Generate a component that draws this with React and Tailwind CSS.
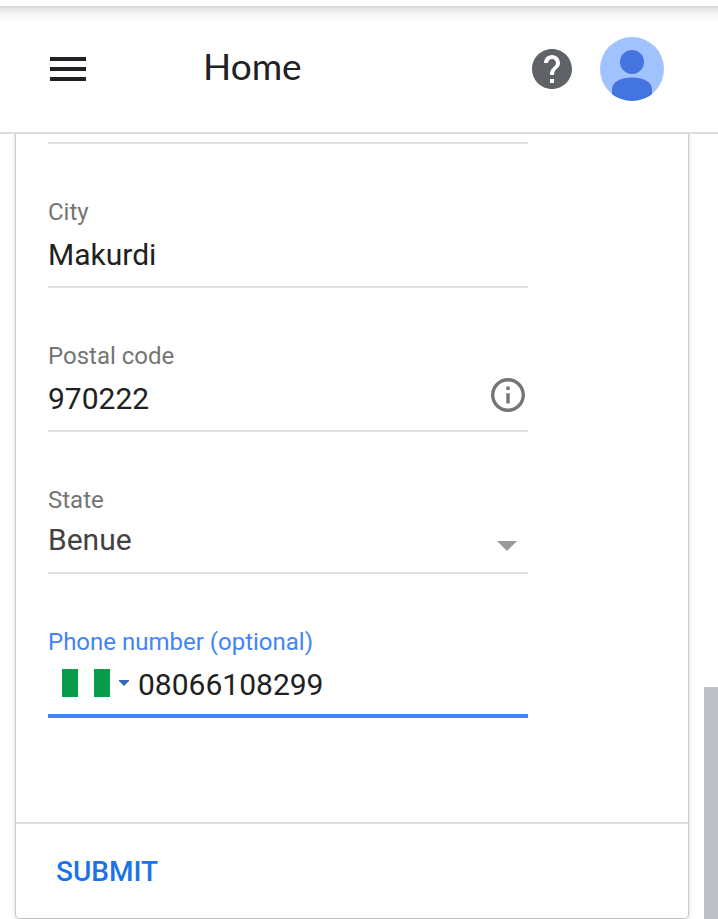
import { useState } from 'react'

const STATES = ['Abia', 'Benue', 'Kano', 'Lagos', 'Rivers']

function Header() {
  return (
    <header className="relative z-10 border-b-2 border-[#dadce0] bg-white pt-[6px]">
      <div className="flex h-[126px] items-center bg-[linear-gradient(to_bottom,#d6d6d6_0px,#e6e6e6_3px,#f4f4f4_8px,#ffffff_16px)] pr-[54px] pl-[50px]">
        <button type="button" aria-label="Main menu" className="flex w-9 flex-col gap-[6px]">
          <span className="h-1 w-full bg-[#202124]" />
          <span className="h-1 w-full bg-[#202124]" />
          <span className="h-1 w-full bg-[#202124]" />
        </button>
        <h1 className="ml-[117px] flex-1 pb-[6px] font-[Lato,sans-serif] text-[37px] leading-[44px] text-[#202124]">
          Home
        </h1>
        <button type="button" aria-label="Help">
          <svg viewBox="2 2 20 20" className="size-10" fill="#5f6368">
            <path d="M12 2C6.48 2 2 6.48 2 12s4.48 10 10 10 10-4.48 10-10S17.52 2 12 2zm1 17h-2v-2h2v2zm2.07-7.75l-.9.92C13.45 12.9 13 13.5 13 15h-2v-.5c0-1.1.45-2.1 1.17-2.83l1.24-1.26c.37-.36.59-.86.59-1.41 0-1.1-.9-2-2-2s-2 .9-2 2H8c0-2.21 1.79-4 4-4s4 1.79 4 4c0 .88-.36 1.68-.93 2.25z" />
          </svg>
        </button>
        <button type="button" aria-label="Account" className="ml-7 overflow-hidden rounded-full">
          <svg viewBox="0 0 64 64" className="size-16">
            <rect width="64" height="64" fill="#a0c3ff" />
            <circle cx="32" cy="25" r="12" fill="#4374e0" />
            <path d="M12 64V52C12 45 21 40.500 32 40.500S52 45 52 52v12z" fill="#4374e0" />
          </svg>
        </button>
      </div>
    </header>
  )
}

export default function App() {
  const [city, setCity] = useState('Makurdi')
  const [postalCode, setPostalCode] = useState('970222')
  const [region, setRegion] = useState('Benue')
  const [phone, setPhone] = useState('08066108299')

  return (
    <div className="flex min-h-screen flex-col bg-white font-[Roboto,sans-serif]">
      <Header />

      <main className="flex flex-1 overflow-hidden">
        <form
          onSubmit={(e) => e.preventDefault()}
          className="-mt-2 mb-px ml-4 flex flex-1 flex-col rounded-b-[4px] bg-white shadow-[0_0_0_1px_rgba(0,0,0,0.12),0_1px_5px_rgba(0,0,0,0.24)]"
        >
          <div className="w-full max-w-[544px] flex-1 px-8 pt-4 pb-[104px]">
            {/* Bottom edge of the address line above */}
            <div className="h-[2px] bg-[#e0e0e0]" />

            {/* City */}
            <div className="border-b-2 border-[#e0e0e0] pt-[54px] pb-3">
              <label htmlFor="city" className="block text-2xl leading-[28px] text-[#757575]">City</label>
              <input
                id="city"
                value={city}
                onChange={(e) => setCity(e.target.value)}
                className="mt-2 block h-10 w-full text-[30px] text-[#212121] outline-none"
              />
            </div>

            {/* Postal code */}
            <div className="border-b-2 border-[#e0e0e0] pt-[54px] pb-3">
              <label htmlFor="postal" className="block text-2xl leading-[28px] text-[#757575]">Postal code</label>
              <div className="mt-2 flex items-start pr-[3px]">
                <input
                  id="postal"
                  value={postalCode}
                  onChange={(e) => setPostalCode(e.target.value)}
                  className="h-10 min-w-0 flex-1 text-[30px] text-[#212121] outline-none"
                />
                <button type="button" aria-label="About postal codes">
                  <svg viewBox="2 2 20 20" className="size-[34px]" fill="#757575">
                    <path d="M11 7h2v2h-2zm0 4h2v6h-2zm1-9C6.480 2 2 6.480 2 12s4.480 10 10 10 10-4.480 10-10S17.520 2 12 2zm0 18c-4.410 0-8-3.590-8-8s3.590-8 8-8 8 3.590 8 8-3.590 8-8 8z" />
                  </svg>
                </button>
              </div>
            </div>

            {/* State */}
            <div className="border-b-2 border-[#e0e0e0] pt-[54px] pb-[14px]">
              <label htmlFor="state" className="block text-2xl leading-[28px] text-[#757575]">State</label>
              <div className="relative mt-2">
                <select
                  id="state"
                  value={region}
                  onChange={(e) => setRegion(e.target.value)}
                  className="block h-9 w-full appearance-none text-[30px] leading-[36px] text-[#424242] outline-none"
                >
                  {STATES.map((s) => (
                    <option key={s}>{s}</option>
                  ))}
                </select>
                <svg viewBox="0 0 20 10" className="pointer-events-none absolute right-[11px] bottom-[7px] h-[10px] w-5" fill="#999999">
                  <path d="M0 0h20L10 10z" />
                </svg>
              </div>
            </div>

            {/* Phone */}
            <div className="border-b-4 border-[#4285f4] pt-[54px] pb-[10px]">
              <label htmlFor="phone" className="block text-2xl leading-[28px] text-[#4285f4]">
                Phone number (optional)
              </label>
              <div className="mt-2 flex items-center">
                <button type="button" aria-label="Country: Nigeria" className="ml-[14px] flex items-center gap-[9px] pb-[2px]">
                  <svg viewBox="0 0 48 28" className="h-7 w-12">
                    <rect width="48" height="28" fill="#fdfffd" />
                    <rect width="16" height="28" fill="#089b49" />
                    <rect x="32" width="16" height="28" fill="#089b49" />
                  </svg>
                  <svg viewBox="0 0 10 6" className="h-[6px] w-[10px]" fill="#3367b8">
                    <path d="M0 0h10v1L5 6 0 1z" />
                  </svg>
                </button>
                <input
                  id="phone"
                  type="tel"
                  value={phone}
                  onChange={(e) => setPhone(e.target.value)}
                  className="ml-[9px] h-10 min-w-0 flex-1 text-[30px] text-[#212121] outline-none"
                />
              </div>
            </div>
          </div>

          <div className="border-t-2 border-[#dadce0] px-10 pt-7 pb-[26px]">
            <button type="submit" className="block text-[28px] leading-[40px] font-medium text-[#1a73e8]">
              SUBMIT
            </button>
          </div>
        </form>

        {/* Scrollbar */}
        <div className="ml-4 flex w-[14px] flex-col justify-end">
          <div className="h-[232px] bg-[#bdc1c6]" />
        </div>
      </main>
    </div>
  )
}
